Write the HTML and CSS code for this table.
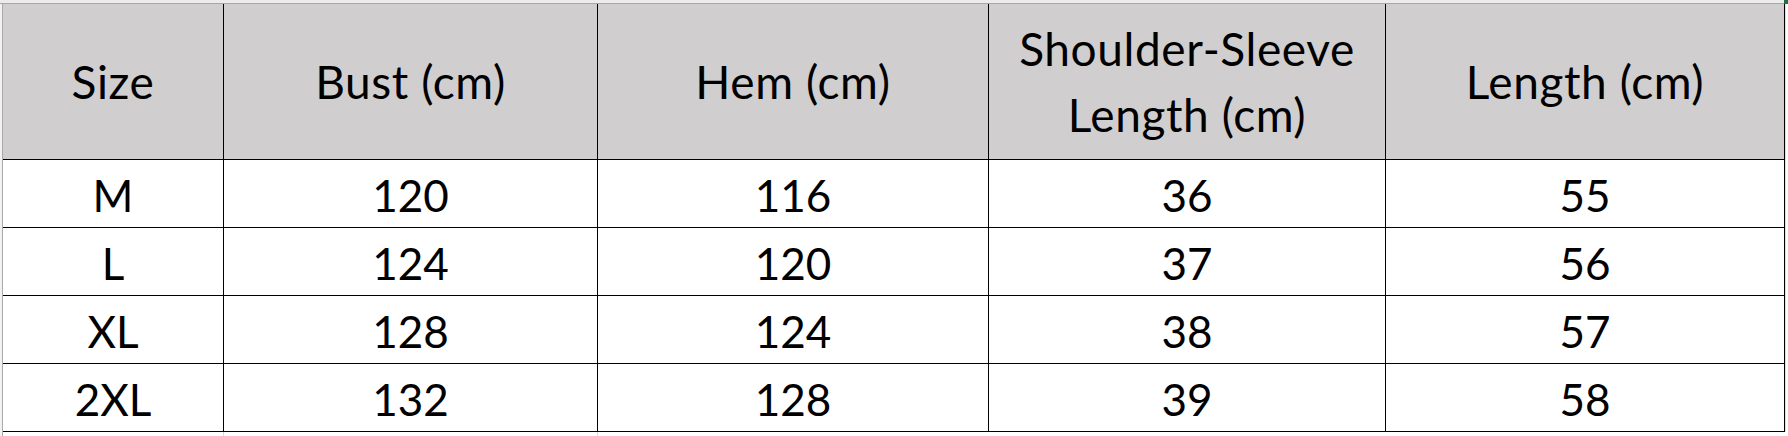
FILE: index.html
```html
<!DOCTYPE html>
<html>
<head>
<meta charset="utf-8">
<title>Size chart</title>
<link rel="stylesheet" href="styles.css">
</head>
<body>
<div class="sheet">
  <div class="topband">
    <div class="topband-main"></div>
    <div class="topband-sel"></div>
  </div>
  <div class="main">
    <div class="gutter"></div>
    <div class="size-table">
      <div class="cell head">Size</div>
      <div class="cell head">Bust (cm)</div>
      <div class="cell head">Hem (cm)</div>
      <div class="cell head two">Shoulder-Sleeve<br>Length (cm)</div>
      <div class="cell head">Length (cm)</div>

      <div class="cell">M</div>
      <div class="cell">120</div>
      <div class="cell">116</div>
      <div class="cell">36</div>
      <div class="cell">55</div>

      <div class="cell">L</div>
      <div class="cell">124</div>
      <div class="cell">120</div>
      <div class="cell">37</div>
      <div class="cell">56</div>

      <div class="cell">XL</div>
      <div class="cell">128</div>
      <div class="cell">124</div>
      <div class="cell">38</div>
      <div class="cell">57</div>

      <div class="cell">2XL</div>
      <div class="cell">132</div>
      <div class="cell">128</div>
      <div class="cell">39</div>
      <div class="cell">58</div>
    </div>
    <div class="right-strip"></div>
  </div>
  <div class="bottom-strip">
    <div class="gutter"></div>
    <div class="bs-cell c1"></div>
    <div class="bs-cell c2"></div>
  </div>
</div>
</body>
</html>
```

FILE: styles.css
```css
html, body {
  margin: 0;
  padding: 0;
  background: #ffffff;
}

.sheet {
  width: 1788px;
  height: 436px;
  overflow: hidden;
  font-family: Lato, "Liberation Sans", sans-serif;
  color: #000;
}

.topband {
  display: flex;
  height: 4px;
}

.topband-main {
  flex: 1;
  background: #ececec;
  border-bottom: 1px solid #a9a9a9;
  box-sizing: border-box;
}

.topband-sel {
  width: 4px;
  background: #217346;
}

.main {
  display: flex;
}

.gutter {
  width: 2px;
  background: #f2f2f2;
}

.size-table {
  display: grid;
  grid-template-columns: 221px 374px 391px 397px 399px;
  grid-template-rows: 156px repeat(4, 68px);
  border-left: 1px solid #a9a9a9;
}

.cell {
  box-sizing: border-box;
  border-right: 1px solid #000;
  border-bottom: 1px solid #000;
  display: flex;
  align-items: center;
  justify-content: center;
  text-align: center;
  font-size: 44px;
  line-height: 1;
  padding-top: 3px;
}

.head {
  background: #d0cece;
  padding-top: 0;
  font-size: 46px;
  letter-spacing: 0.6px;
}

.two {
  line-height: 66px;
}

.right-strip {
  flex: 1;
  background: #ffffff;
  border-left: 1px solid #e2e2e2;
}

.bottom-strip {
  display: flex;
  height: 5px;
}

.bs-cell {
  box-sizing: border-box;
  border-right: 1px solid #d9d9d9;
}

.bottom-strip .gutter {
  border-right: 1px solid #a9a9a9;
  width: 3px;
  box-sizing: border-box;
}

.bs-cell.c1 {
  width: 221px;
}

.bs-cell.c2 {
  width: 374px;
}
```
